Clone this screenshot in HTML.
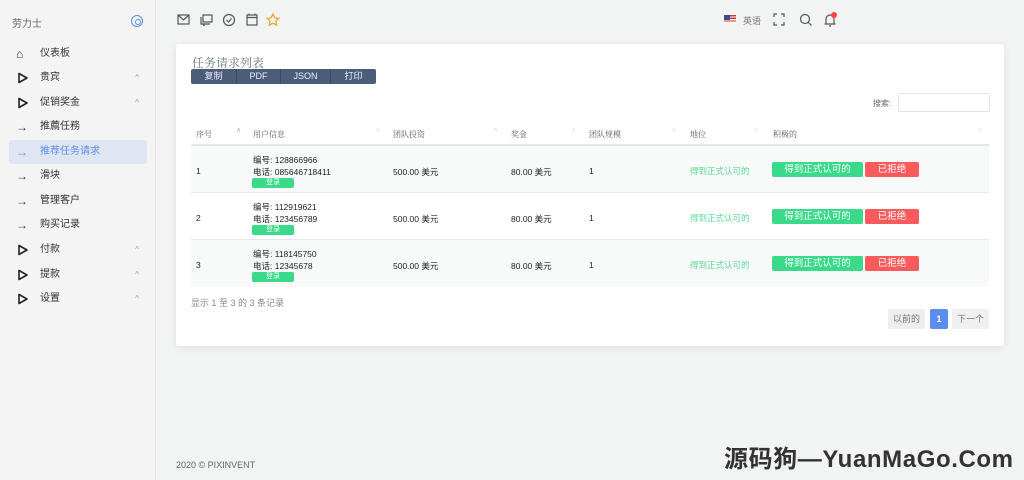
<!DOCTYPE html>
<html><head><meta charset="utf-8"><style>
*{margin:0;padding:0;box-sizing:border-box}
body{width:1024px;height:480px;background:#f2f3f3;font-family:"Liberation Sans","Noto Sans CJK SC",sans-serif;position:relative;overflow:hidden;color:#333}
.sb{position:absolute;left:0;top:0;width:156px;height:480px;background:#f4f4f4;border-right:1px solid #e4e4e4}
.sb .t{position:absolute;left:12px;top:15px;font-size:10px;color:#666}
.sb .c{position:absolute;left:131px;top:15px;width:12px;height:12px;border:1.5px solid #5b8def;border-radius:50%}
.sb .c:after{content:"";position:absolute;left:2.5px;top:2.5px;width:4px;height:4px;border:1.2px solid #5b8def;border-radius:50%}
.it{position:absolute;left:9px;width:138px;height:24px;font-size:10px;color:#333;line-height:24px;padding-left:31px;border-radius:3px}
.it .ic{position:absolute;left:7px;top:0;font-size:12px;font-weight:bold}
.it .ar{position:absolute;right:8px;top:0;font-size:8px;color:#999}
.it svg{position:absolute;left:8px;top:6px}
.act{background:#dfe5f2;color:#5b8def}
.card{position:absolute;left:176px;top:44px;width:828px;height:302px;background:#fff;border-radius:3px;box-shadow:0 2px 8px rgba(0,0,0,.08)}
.ttl{position:absolute;left:16px;top:10px;font-size:12px;color:#6b7886;font-family:"Liberation Serif","Noto Serif CJK SC",serif}
.btns{position:absolute;left:15px;top:25px;width:185px;height:15px;background:#4b5d78;border-radius:2px;display:flex;font-size:9px;color:#eef}
.btns span{text-align:center;line-height:15px;border-right:1px solid #3a4a62}
.tbl{position:absolute;left:15px;top:80px;width:798px}
.hd{height:22px;border-bottom:2px solid #e6e7ec;position:relative;font-size:8px;color:#556;font-family:"Liberation Serif","Noto Serif CJK SC",serif}
.hd span{position:absolute;top:5px}
.hd i{position:absolute;top:3px;font-style:normal;font-size:7px;color:#bbb}
.row{height:47px;position:relative;font-size:8.5px;color:#222;border-bottom:1px solid #e8e8e8}
.row.g{background:#f8f9f9}
.row span{position:absolute}
.login{position:absolute;left:61px;width:42px;height:10px;background:#3bd98a;border-radius:2px;color:#fff;font-size:7px;text-align:center;line-height:10px}
.gt{color:#58d898}
.bg{position:absolute;left:581px;width:91px;height:15px;background:#3bd98a;color:#fff;border-radius:2px;text-align:center;line-height:15px;font-size:9.5px}
.br{position:absolute;left:674px;width:54px;height:15px;background:#fb5a5c;color:#fff;border-radius:2px;text-align:center;line-height:15px;font-size:9.5px}
</style></head><body>
<div class="sb">
<div class="t">劳力士</div><div class="c"></div>
<div class="it" style="top:42px"><span class="ic">⌂</span>仪表板</div>
<div class="it" style="top:66px"><svg width="12" height="12"><path d="M2 1.5v9l8-4.5z" fill="none" stroke="#222" stroke-width="1.6" stroke-linejoin="round"/></svg>贵宾<span class="ar">^</span></div>
<div class="it" style="top:91px"><svg width="12" height="12"><path d="M2 1.5v9l8-4.5z" fill="none" stroke="#222" stroke-width="1.6" stroke-linejoin="round"/></svg>促销奖金<span class="ar">^</span></div>
<div class="it" style="top:115px"><span class="ic">→</span>推薦任務</div>
<div class="it act" style="top:140px"><span class="ic">→</span>推荐任务请求</div>
<div class="it" style="top:164px"><span class="ic">→</span>滑块</div>
<div class="it" style="top:189px"><span class="ic">→</span>管理客户</div>
<div class="it" style="top:213px"><span class="ic">→</span>购买记录</div>
<div class="it" style="top:238px"><svg width="12" height="12"><path d="M2 1.5v9l8-4.5z" fill="none" stroke="#222" stroke-width="1.6" stroke-linejoin="round"/></svg>付款<span class="ar">^</span></div>
<div class="it" style="top:263px"><svg width="12" height="12"><path d="M2 1.5v9l8-4.5z" fill="none" stroke="#222" stroke-width="1.6" stroke-linejoin="round"/></svg>提款<span class="ar">^</span></div>
<div class="it" style="top:287px"><svg width="12" height="12"><path d="M2 1.5v9l8-4.5z" fill="none" stroke="#222" stroke-width="1.6" stroke-linejoin="round"/></svg>设置<span class="ar">^</span></div>
</div>
<svg style="position:absolute;left:176px;top:12px" width="110" height="16" fill="none" stroke="#555" stroke-width="1.2">
<rect x="2" y="3" width="11" height="9"/><path d="M2 3l5.5 5 5.5-5"/>
<rect x="27" y="3" width="9" height="7"/><path d="M25 5v7h2l1 2v-2h6"/>
<circle cx="53" cy="8" r="5.5"/><path d="M50.5 8l2 2 3-3.5"/>
<rect x="71" y="3" width="10" height="10"/><path d="M71 5.5h10M73 1.5v2M79 1.5v2"/>
<path stroke="#f0a030" d="M97 2l1.8 3.8 4.1.5-3 2.8.8 4.1-3.7-2-3.7 2 .8-4.1-3-2.8 4.1-.5z"/>
</svg>
<div style="position:absolute;left:724px;top:15px;width:12px;height:9px;background:linear-gradient(#c33 0 15%,#fff 15% 30%,#c33 30% 45%,#fff 45% 60%,#c33 60% 75%,#fff 75%)"><div style="width:6px;height:5px;background:#3b4a8a"></div></div>
<div style="position:absolute;left:743px;top:14px;font-size:9px;color:#777">英语</div>
<svg style="position:absolute;left:772px;top:12px" width="70" height="16" fill="none" stroke="#555" stroke-width="1.2">
<path d="M2 5V2h3M9 2h3v3M12 10v3H9M5 13H2v-3"/>
<circle cx="33" cy="7" r="4.5"/><path d="M36.5 10.5l3 3"/>
<path d="M54 12V7a4 4 0 018 0v5h1.5h-11M57 14h2"/>
</svg>
<div style="position:absolute;left:831px;top:12px;width:6px;height:6px;background:#f44;border-radius:50%"></div>
<div class="card">
<div class="ttl">任务请求列表</div>
<div class="btns"><span style="width:46px">复制</span><span style="width:44px">PDF</span><span style="width:50px">JSON</span><span style="width:45px;border:none">打印</span></div>
<div style="position:absolute;left:697px;top:54px;font-size:8px;color:#666">搜索:</div>
<div style="position:absolute;left:722px;top:49px;width:92px;height:19px;border:1px solid #e4e4e4;border-radius:2px"></div>
<div class="tbl">
<div class="hd"><span style="left:5px">序号</span><i style="left:46px;color:#445">^</i>
<span style="left:62px">用户信息</span><i style="left:185px">^</i>
<span style="left:202px">团队投资</span><i style="left:303px">^</i>
<span style="left:320px">奖金</span><i style="left:381px">^</i>
<span style="left:398px">团队规模</span><i style="left:481px">^</i>
<span style="left:499px">地位</span><i style="left:564px">^</i>
<span style="left:582px">积极的</span><i style="left:788px">^</i></div>
<div class="row g"><span style="left:5px;top:20px">1</span><span style="left:62px;top:8px">编号: 128866966</span><span style="left:62px;top:20px">电话: 085646718411</span><div class="login" style="top:32px">登录</div><span style="left:202px;top:20px">500.00 美元</span><span style="left:320px;top:20px">80.00 美元</span><span style="left:398px;top:20px">1</span><span class="gt" style="left:499px;top:19px">得到正式认可的</span><div class="bg" style="top:16px">得到正式认可的</div><div class="br" style="top:16px">已拒绝</div></div>
<div class="row"><span style="left:5px;top:20px">2</span><span style="left:62px;top:8px">编号: 112919621</span><span style="left:62px;top:20px">电话: 123456789</span><div class="login" style="top:32px">登录</div><span style="left:202px;top:20px">500.00 美元</span><span style="left:320px;top:20px">80.00 美元</span><span style="left:398px;top:20px">1</span><span class="gt" style="left:499px;top:19px">得到正式认可的</span><div class="bg" style="top:16px">得到正式认可的</div><div class="br" style="top:16px">已拒绝</div></div>
<div class="row g" style="border:none"><span style="left:5px;top:20px">3</span><span style="left:62px;top:8px">编号: 118145750</span><span style="left:62px;top:20px">电话: 12345678</span><div class="login" style="top:32px">登录</div><span style="left:202px;top:20px">500.00 美元</span><span style="left:320px;top:20px">80.00 美元</span><span style="left:398px;top:20px">1</span><span class="gt" style="left:499px;top:19px">得到正式认可的</span><div class="bg" style="top:16px">得到正式认可的</div><div class="br" style="top:16px">已拒绝</div></div>
</div>
<div style="position:absolute;left:15px;top:252px;font-size:9px;color:#888">显示 1 至 3 的 3 条记录</div>
<div style="position:absolute;left:712px;top:265px;width:37px;height:20px;background:#eee;border-radius:2px;font-size:9px;color:#777;text-align:center;line-height:20px">以前的</div>
<div style="position:absolute;left:754px;top:265px;width:18px;height:20px;background:#5b8def;border-radius:2px;font-size:9px;color:#fff;text-align:center;line-height:20px;font-weight:bold">1</div>
<div style="position:absolute;left:776px;top:265px;width:37px;height:20px;background:#f0f0f0;border-radius:2px;font-size:9px;color:#777;text-align:center;line-height:20px">下一个</div>
</div>
<div style="position:absolute;left:176px;top:460px;font-size:9px;color:#666">2020 © PIXINVENT</div>
<div style="position:absolute;left:724px;top:439px;font-size:24px;font-weight:bold;color:#333;letter-spacing:0.6px">源码狗—YuanMaGo.Com</div>
</body></html>
